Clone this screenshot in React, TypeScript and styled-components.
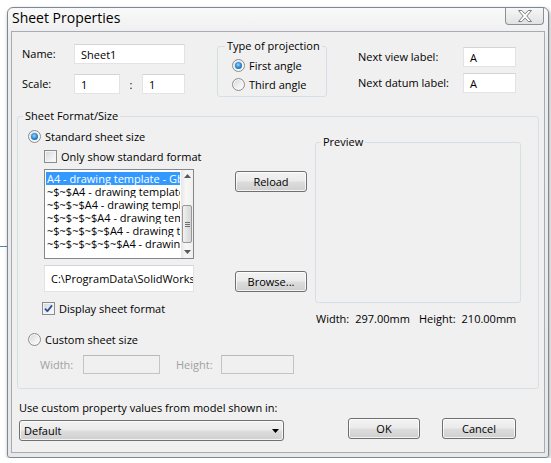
import React from "react";
import styled, { createGlobalStyle } from "styled-components";

const GlobalStyle = createGlobalStyle`
  html, body { margin: 0; padding: 0; }
  body {
    background: linear-gradient(#5a7ec4, #5a7ec4) no-repeat 0 246px / 10px 1px, #ffffff;
    font-family: "Open Sans", "Noto Sans", "DejaVu Sans", sans-serif;
    font-size: 11px;
    color: #000;
  }
  * { box-sizing: border-box; }
`;

const Window = styled.div`
  margin: 7px 0 0 7px;
  width: 542px;
  height: 451px;
  border: 1px solid #7d8894;
  border-radius: 6px 6px 3px 3px;
  background: linear-gradient(180deg, #f9f9f9 0%, #ededed 30px, #e8e8e8 100%);
  box-shadow: 1px 2px 4px rgba(0, 0, 0, 0.35);
  display: flex;
  flex-direction: column;
`;

const TitleBar = styled.div`
  height: 23px;
  flex: none;
  display: flex;
  align-items: flex-start;
  padding-left: 4px;
`;

const Title = styled.div`
  font-size: 14px;
  line-height: 20px;
`;

const CloseButton = styled.div`
  margin-left: auto;
  margin-right: 4px;
  width: 39px;
  height: 17px;
  border: 1px solid #8a9098;
  border-top: none;
  border-radius: 0 0 4px 4px;
  background: linear-gradient(180deg, #f7f7f7, #e2e2e2);
  display: flex;
  align-items: center;
  justify-content: center;
`;

const Client = styled.div`
  flex: 1;
  margin: 0 3px 4px 3px;
  border: 1px solid #a5acb5;
  background: #f0f0f0;
  display: flex;
  flex-direction: column;
`;

const TopRow = styled.div`
  display: flex;
  align-items: flex-start;
  padding: 12px 0 0 10px;
`;

const Column = styled.div<{ $gap: number; $ml?: number; $mt?: number }>`
  display: flex;
  flex-direction: column;
  gap: ${(p) => p.$gap}px;
  margin-left: ${(p) => p.$ml ?? 0}px;
  margin-top: ${(p) => p.$mt ?? 0}px;
`;

const FieldRow = styled.div`
  display: flex;
  align-items: center;
  height: 20px;
`;

const Label = styled.span<{ $w?: number; $disabled?: boolean; $ml?: number }>`
  flex: none;
  width: ${(p) => (p.$w ? `${p.$w}px` : "auto")};
  margin-left: ${(p) => p.$ml ?? 0}px;
  color: ${(p) => (p.$disabled ? "#a0a0a0" : "#000")};
  line-height: 16px;
  white-space: nowrap;
`;

const TextBox = styled.div<{ $w: number; $h?: number; $disabled?: boolean }>`
  flex: none;
  width: ${(p) => p.$w}px;
  height: ${(p) => p.$h ?? 20}px;
  background: ${(p) => (p.$disabled ? "#f0f0f0" : "#ffffff")};
  border: 1px solid ${(p) => (p.$disabled ? "#c4c4c4" : "#e2e3e6")};
  border-top-color: ${(p) => (p.$disabled ? "#b8b8b8" : "#d2d4d8")};
  padding: 0 6px;
  display: flex;
  align-items: center;
  white-space: nowrap;
  overflow: hidden;
`;

const Colon = styled.span`
  width: 22px;
  text-align: center;
`;

const Group = styled.fieldset<{ $w?: number }>`
  margin: 0;
  padding: 0;
  min-width: 0;
  width: ${(p) => (p.$w ? `${p.$w}px` : "auto")};
  border: 1px solid #d5dfe5;
  border-radius: 3px;
`;

const ProjectionGroup = styled(Group)`
  margin: -6px 0 0 32px;
`;

const FormatGroup = styled(Group)`
  margin: 11px 5px 0 5px;
`;

const Legend = styled.legend<{ $ml: number }>`
  margin-left: ${(p) => p.$ml}px;
  padding: 0 2px;
  line-height: 16px;
`;

const ProjectionBody = styled.div`
  padding: 2px 0 2px 14px;
`;

const OptionRow = styled.div<{ $h?: number; $indent?: number; $mt?: number }>`
  display: flex;
  align-items: center;
  gap: 4px;
  height: ${(p) => p.$h ?? 16}px;
  margin-left: ${(p) => p.$indent ?? 0}px;
  margin-top: ${(p) => p.$mt ?? 0}px;
  white-space: nowrap;
`;

const RadioCircle = styled.span<{ $checked?: boolean }>`
  position: relative;
  flex: none;
  width: 13px;
  height: 13px;
  border-radius: 50%;
  border: 1px solid #8b8c8e;
  background: linear-gradient(135deg, #d4d4d4 0%, #f2f2f2 60%, #ffffff 100%);
  box-shadow: inset 0 0 0 1px #f6f6f6;
  &::after {
    content: "";
    display: ${(p) => (p.$checked ? "block" : "none")};
    position: absolute;
    left: 2px;
    top: 2px;
    width: 7px;
    height: 7px;
    border-radius: 50%;
    background: radial-gradient(circle at 45% 40%, #9ad8ff 0%, #2f8fd8 45%, #124a7e 100%);
  }
`;

const CheckBox = styled.span`
  flex: none;
  width: 13px;
  height: 13px;
  border: 1px solid #8b8c8e;
  background: linear-gradient(135deg, #d2d5da 0%, #eef0f2 60%, #fafafa 100%);
  box-shadow: inset 0 0 0 1px #f4f4f4;
  display: flex;
  align-items: center;
  justify-content: center;
`;

const FormatBody = styled.div`
  display: grid;
  grid-template-columns: 279px 206px;
  column-gap: 8px;
  padding: 4px 0 14px 10px;
`;

const LeftCol = styled.div`
  display: flex;
  flex-direction: column;
`;

const WidgetRow = styled.div<{ $mt: number; $align?: string; $indent?: number }>`
  display: flex;
  align-items: ${(p) => p.$align ?? "flex-start"};
  margin-top: ${(p) => p.$mt}px;
  margin-left: ${(p) => p.$indent ?? 0}px;
`;

const ListBox = styled.div`
  flex: none;
  width: 150px;
  height: 90px;
  border: 1px solid #828790;
  background: #ffffff;
  display: flex;
`;

const ListItems = styled.div`
  flex: 1;
  min-width: 0;
  padding: 2px 1px 0 1px;
  overflow: hidden;
`;

const ListItem = styled.div<{ $selected?: boolean }>`
  height: 13px;
  line-height: 13px;
  padding-left: 1px;
  white-space: nowrap;
  overflow: hidden;
  background: ${(p) => (p.$selected ? "#3399ff" : "transparent")};
  color: ${(p) => (p.$selected ? "#ffffff" : "#000")};
`;

const ScrollBar = styled.div`
  flex: none;
  width: 12px;
  display: flex;
  flex-direction: column;
  align-items: center;
  background: linear-gradient(90deg, #e6e6e6, #f7f7f7 40%, #f0f0f0);
`;

const ScrollArrow = styled.div`
  height: 12px;
  width: 100%;
  display: flex;
  align-items: center;
  justify-content: center;
`;

const ScrollThumb = styled.div`
  margin-top: 23px;
  width: 10px;
  height: 38px;
  border: 1px solid #989898;
  border-radius: 2px;
  background: linear-gradient(90deg, #f2f2f2, #e2e2e2 50%, #d6d6d6);
  display: flex;
  flex-direction: column;
  align-items: center;
  justify-content: center;
  gap: 1px;
`;

const Grip = styled.span`
  width: 5px;
  height: 1px;
  background: #6f6f6f;
`;

const ScrollSpacer = styled.div`
  flex: 1;
`;

const PushButton = styled.button<{ $w: number; $ml?: number }>`
  flex: none;
  width: ${(p) => p.$w}px;
  height: 21px;
  margin: 0 0 0 ${(p) => p.$ml ?? 0}px;
  padding: 0;
  font: inherit;
  color: #000;
  border: 1px solid #707070;
  border-radius: 3px;
  background: linear-gradient(180deg, #f2f2f2 0%, #ebebeb 48%, #dddddd 52%, #cfcfcf 100%);
  box-shadow: inset 0 0 0 1px rgba(255, 255, 255, 0.75);
`;

const ReloadButton = styled(PushButton)`
  margin-top: 2px;
`;

const RightCol = styled.div`
  display: flex;
  flex-direction: column;
`;

const PreviewGroup = styled(Group)`
  margin-top: 6px;
`;

const PreviewArea = styled.div`
  height: 152px;
`;

const Dims = styled.div`
  margin-top: 8px;
  margin-left: 1px;
  display: flex;
  line-height: 16px;
  white-space: nowrap;
`;

const DimValue = styled.span<{ $ml: number }>`
  margin-left: ${(p) => p.$ml}px;
`;

const BottomArea = styled.div`
  display: flex;
  align-items: flex-end;
  padding: 11px 0 0 7px;
`;

const BottomLeft = styled.div`
  display: flex;
  flex-direction: column;
  gap: 4px;
`;

const ComboBox = styled.div`
  width: 265px;
  height: 21px;
  border: 1px solid #707070;
  border-radius: 3px;
  background: linear-gradient(180deg, #f2f2f2 0%, #ebebeb 48%, #dddddd 52%, #cfcfcf 100%);
  box-shadow: inset 0 0 0 1px rgba(255, 255, 255, 0.75);
  display: flex;
  align-items: center;
  padding: 0 4px 0 4px;
`;

const ComboText = styled.span`
  flex: 1;
`;

const ButtonGroup = styled.div`
  display: flex;
  gap: 22px;
  margin: 0 0 2px 64px;
`;

const Radio = ({ checked, children }: { checked?: boolean; children: React.ReactNode }) => (
  <>
    <RadioCircle $checked={checked} />
    <span>{children}</span>
  </>
);

const CheckMark = () => (
  <svg width="9" height="9" viewBox="0 0 9 9">
    <path d="M1 4.6 L3.4 7.2 L8 1.4" fill="none" stroke="#2c4f94" strokeWidth="1.8" strokeLinejoin="round" />
  </svg>
);

const items = [
  "A4 - drawing template - Gb.slddrt",
  "~$~$A4 - drawing template - Gb.slddrt",
  "~$~$~$A4 - drawing template - Gb.slddrt",
  "~$~$~$~$A4 - drawing template - Gb.slddrt",
  "~$~$~$~$~$A4 - drawing template - Gb.slddrt",
  "~$~$~$~$~$~$A4 - drawing template - Gb.slddrt",
];

export default function App() {
  return (
    <>
      <GlobalStyle />
      <Window>
        <TitleBar>
          <Title>Sheet Properties</Title>
          <CloseButton>
            <svg width="14" height="12" viewBox="0 0 14 12">
              <path
                d="M0.5 0.5 H3.8 L7 3.9 L10.2 0.5 H13.5 L8.8 6 L13.5 11.5 H10.2 L7 8.1 L3.8 11.5 H0.5 L5.2 6 Z"
                fill="#ffffff"
                stroke="#7b7f85"
                strokeWidth="1"
                strokeLinejoin="round"
              />
            </svg>
          </CloseButton>
        </TitleBar>
        <Client>
          <TopRow>
            <Column $gap={10}>
              <FieldRow>
                <Label $w={52}>Name:</Label>
                <TextBox $w={111}>Sheet1</TextBox>
              </FieldRow>
              <FieldRow>
                <Label $w={52}>Scale:</Label>
                <TextBox $w={46}>1</TextBox>
                <Colon>:</Colon>
                <TextBox $w={43}>1</TextBox>
              </FieldRow>
            </Column>
            <ProjectionGroup $w={110}>
              <Legend $ml={7}>Type of projection</Legend>
              <ProjectionBody>
                <OptionRow $h={19}>
                  <Radio checked>First angle</Radio>
                </OptionRow>
                <OptionRow $h={19}>
                  <Radio>Third angle</Radio>
                </OptionRow>
              </ProjectionBody>
            </ProjectionGroup>
            <Column $gap={6} $ml={31} $mt={3}>
              <FieldRow>
                <Label $w={105}>Next view label:</Label>
                <TextBox $w={53}>A</TextBox>
              </FieldRow>
              <FieldRow>
                <Label $w={105}>Next datum label:</Label>
                <TextBox $w={53}>A</TextBox>
              </FieldRow>
            </Column>
          </TopRow>

          <FormatGroup>
            <Legend $ml={5}>Sheet Format/Size</Legend>
            <FormatBody>
              <LeftCol>
                <OptionRow>
                  <Radio checked>Standard sheet size</Radio>
                </OptionRow>
                <OptionRow $indent={16} $mt={4}>
                  <CheckBox />
                  <span>Only show standard format</span>
                </OptionRow>
                <WidgetRow $mt={5} $indent={16}>
                  <ListBox>
                    <ListItems>
                      {items.map((t, i) => (
                        <ListItem key={i} $selected={i === 0}>
                          {t}
                        </ListItem>
                      ))}
                    </ListItems>
                    <ScrollBar>
                      <ScrollArrow>
                        <svg width="7" height="4" viewBox="0 0 7 4">
                          <path d="M0 4 L3.5 0 L7 4 Z" fill="#5a5a5a" />
                        </svg>
                      </ScrollArrow>
                      <ScrollThumb>
                        <Grip />
                        <Grip />
                        <Grip />
                      </ScrollThumb>
                      <ScrollSpacer />
                      <ScrollArrow>
                        <svg width="7" height="4" viewBox="0 0 7 4">
                          <path d="M0 0 L3.5 4 L7 0 Z" fill="#5a5a5a" />
                        </svg>
                      </ScrollArrow>
                    </ScrollBar>
                  </ListBox>
                  <ReloadButton $w={72} $ml={41}>
                    Reload
                  </ReloadButton>
                </WidgetRow>
                <WidgetRow $mt={6} $indent={16} $align="flex-end">
                  <TextBox $w={150} $h={27}>
                    C:\ProgramData\SolidWorks\SolidWorks 2013\lang\english\sheetformat\a4 - drawing template.slddrt
                  </TextBox>
                  <PushButton $w={72} $ml={41}>
                    Browse...
                  </PushButton>
                </WidgetRow>
                <OptionRow $indent={14} $mt={8}>
                  <CheckBox>
                    <CheckMark />
                  </CheckBox>
                  <span>Display sheet format</span>
                </OptionRow>
                <OptionRow $mt={15}>
                  <Radio>Custom sheet size</Radio>
                </OptionRow>
                <WidgetRow $mt={8} $indent={12} $align="center">
                  <Label $w={43} $disabled>
                    Width:
                  </Label>
                  <TextBox $w={77} $h={19} $disabled />
                  <Label $w={45} $ml={16} $disabled>
                    Height:
                  </Label>
                  <TextBox $w={73} $h={19} $disabled />
                </WidgetRow>
              </LeftCol>
              <RightCol>
                <PreviewGroup>
                  <Legend $ml={5}>Preview</Legend>
                  <PreviewArea />
                </PreviewGroup>
                <Dims>
                  <span>Width:</span>
                  <DimValue $ml={6}>297.00mm</DimValue>
                  <DimValue $ml={9}>Height:</DimValue>
                  <DimValue $ml={6}>210.00mm</DimValue>
                </Dims>
              </RightCol>
            </FormatBody>
          </FormatGroup>

          <BottomArea>
            <BottomLeft>
              <Label>Use custom property values from model shown in:</Label>
              <ComboBox>
                <ComboText>Default</ComboText>
                <svg width="7" height="4" viewBox="0 0 7 4">
                  <path d="M0 0 L3.5 4 L7 0 Z" fill="#000" />
                </svg>
              </ComboBox>
            </BottomLeft>
            <ButtonGroup>
              <PushButton $w={72}>OK</PushButton>
              <PushButton $w={74}>Cancel</PushButton>
            </ButtonGroup>
          </BottomArea>
        </Client>
      </Window>
    </>
  );
}
